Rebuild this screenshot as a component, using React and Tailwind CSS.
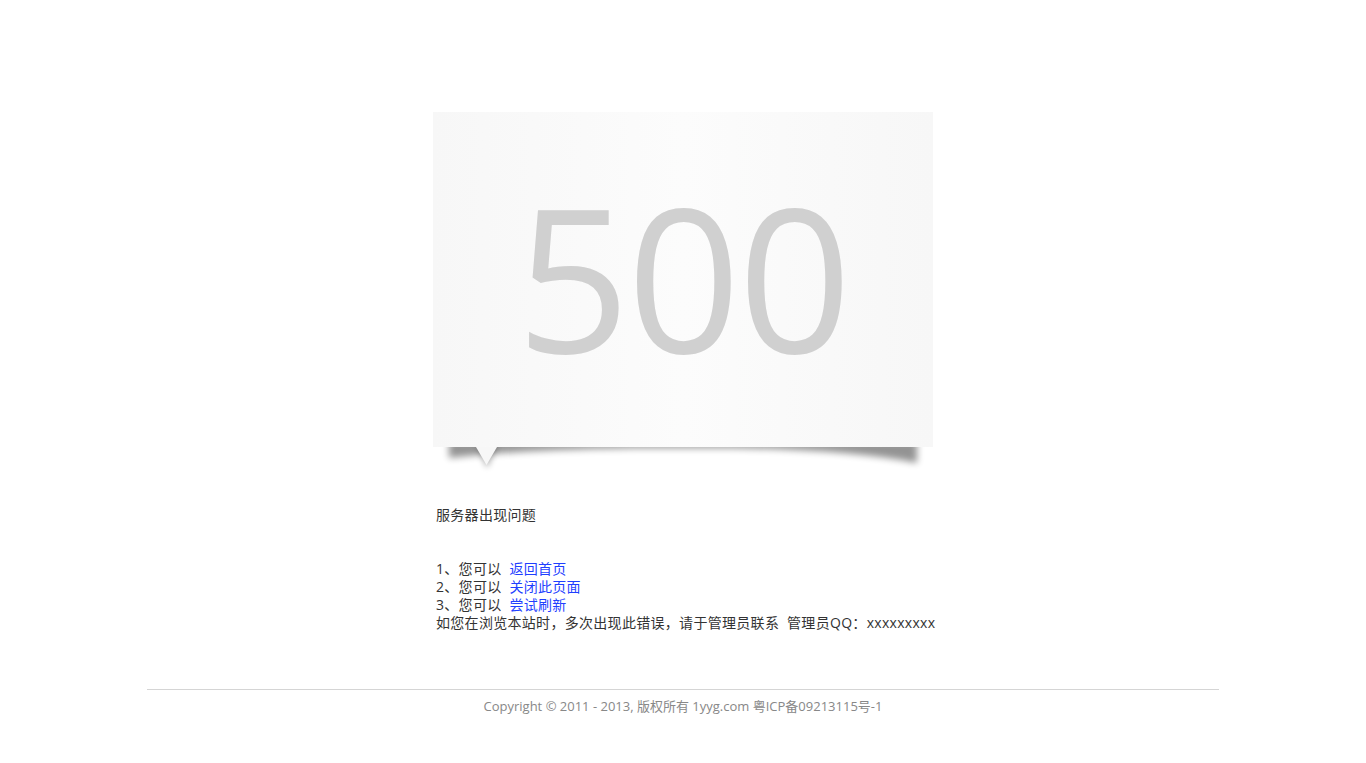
export default function App() {
  const cjk = { fontFamily: '"Open Sans", "Noto Sans CJK SC", sans-serif' };
  return (
    <div className="min-h-[763px] w-full bg-white" style={cjk}>
      <div className="mx-auto w-[500px] pt-[112px]">
        <div className="relative">
          <div className="relative z-10 flex h-[335px] w-[500px] items-center justify-center bg-gradient-to-r from-[#f7f7f7] via-[#fcfcfc] to-[#f7f7f7]">
            <span
              className="mt-[-9px] pr-[1px] text-[199px] leading-none tracking-[-3px] text-[#d0d0d0]"
              style={{ fontFamily: '"Open Sans", sans-serif' }}
            >
              500
            </span>
          </div>
          <svg
            className="pointer-events-none absolute left-0 top-[325px] z-20"
            width="500"
            height="60"
            viewBox="0 0 500 60"
          >
            <defs>
              <filter id="b" x="-20%" y="-200%" width="140%" height="500%">
                <feGaussianBlur stdDeviation="3.5" />
              </filter>
              <filter id="b2" x="-50%" y="-50%" width="200%" height="200%">
                <feGaussianBlur stdDeviation="3" />
              </filter>
              <clipPath id="c">
                <rect x="0" y="10" width="500" height="50" />
              </clipPath>
            </defs>
            <g clipPath="url(#c)">
              <path
                d="M16 4 L484 4 L484 26 Q420 13 300 11 L200 11 Q80 13 16 21 Z"
                fill="#000"
                opacity="0.42"
                filter="url(#b)"
              />
              <path d="M44 8 L64 8 L54 31 Z" fill="#000" opacity="0.35" filter="url(#b2)" />
            </g>
            <path d="M43 10 L64 10 L53.5 28 Z" fill="#f7f7f7" />
          </svg>
        </div>
        <div className="relative pl-[3px] pt-[59px] text-[14px] leading-[18px] tracking-[0.3px] text-[#333]">
          <div>服务器出现问题</div>
          <div className="mt-[36px]">
            <div>
              1、您可以&nbsp;&nbsp;
              <a className="text-[#1f3fff]" href="#">返回首页</a>
            </div>
            <div>
              2、您可以&nbsp;&nbsp;
              <a className="text-[#1f3fff]" href="#">关闭此页面</a>
            </div>
            <div>
              3、您可以&nbsp;&nbsp;
              <a className="text-[#1f3fff]" href="#">尝试刷新</a>
            </div>
            <div className="whitespace-nowrap">如您在浏览本站时，多次出现此错误，请于管理员联系&nbsp;&nbsp;管理员QQ：xxxxxxxxx</div>
          </div>
        </div>
      </div>
      <div className="mx-auto mt-[57px] w-[1072px] border-t border-[#d5d5d5] pt-[7px] text-center text-[13px] leading-[18px] text-[#888]">
        Copyright © 2011 - 2013, 版权所有 1yyg.com 粤ICP备09213115号-1
      </div>
    </div>
  );
}
